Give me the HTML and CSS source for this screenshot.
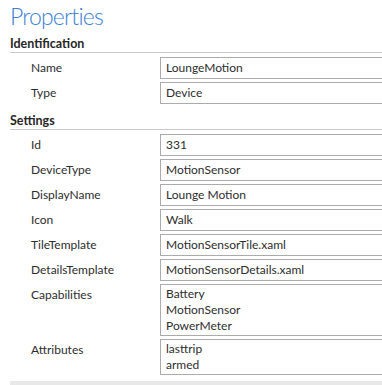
FILE: index.html
```html
<!DOCTYPE html>
<html>
<head>
<meta charset="utf-8">
<link rel="stylesheet" href="styles.css">
</head>
<body>
<div class="panel">
  <h1 class="title">Properties</h1>

  <div class="section-header">Identification</div>
  <div class="rows">
    <div class="row"><div class="label">Name</div><div class="box">LoungeMotion</div></div>
    <div class="row"><div class="label">Type</div><div class="box">Device</div></div>
  </div>

  <div class="section-header settings">Settings</div>
  <div class="rows">
    <div class="row"><div class="label">Id</div><div class="box">331</div></div>
    <div class="row"><div class="label">DeviceType</div><div class="box">MotionSensor</div></div>
    <div class="row"><div class="label">DisplayName</div><div class="box">Lounge Motion</div></div>
    <div class="row"><div class="label">Icon</div><div class="box">Walk</div></div>
    <div class="row"><div class="label">TileTemplate</div><div class="box">MotionSensorTile.xaml</div></div>
    <div class="row"><div class="label">DetailsTemplate</div><div class="box">MotionSensorDetails.xaml</div></div>
    <div class="row multi"><div class="label">Capabilities</div><div class="box">Battery<br>MotionSensor<br>PowerMeter</div></div>
    <div class="row multi"><div class="label">Attributes</div><div class="box">lasttrip<br>armed</div></div>
  </div>

  <div class="footer-bar"></div>
</div>
</body>
</html>
```

FILE: styles.css
```css
html, body {
  margin: 0;
  padding: 0;
  background: #ffffff;
  overflow: hidden;
}

body {
  font-family: "Lato", "Open Sans", "Liberation Sans", sans-serif;
  font-size: 12px;
  color: #2d2d2d;
}

.panel {
  padding-left: 10px;
}

.title {
  margin: 0;
  padding-top: 1px;
  font-size: 23px;
  font-weight: 300;
  letter-spacing: -0.8px;
  line-height: 31px;
  height: 31px;
  color: #3a80d6;
}

.section-header {
  margin-top: 4px;
  font-weight: 700;
  font-size: 12.5px;
  line-height: 16px;
  color: #262626;
  border-bottom: 1px solid #c9c9c9;
}

.section-header.settings {
  margin-top: 9px;
}

.rows {
  display: flex;
  flex-direction: column;
  gap: 3px;
  margin-top: 4px;
}

.row {
  display: grid;
  grid-template-columns: 129px 1fr;
  padding-left: 21px;
  align-items: center;
}

.row.multi {
  align-items: start;
}

.label {
  line-height: 16px;
}

.row.multi .label {
  padding-top: 3px;
}

.box {
  border: 1px solid #ababab;
  border-right: none;
  height: 22px;
  box-sizing: border-box;
  padding: 0 5px;
  line-height: 20px;
  color: #2d2d2d;
}

.row.multi .box {
  height: auto;
  line-height: 16px;
  padding: 1px 5px 1px;
}

.footer-bar {
  margin-top: 6px;
  height: 6px;
  background: #e8e8e8;
}
```
